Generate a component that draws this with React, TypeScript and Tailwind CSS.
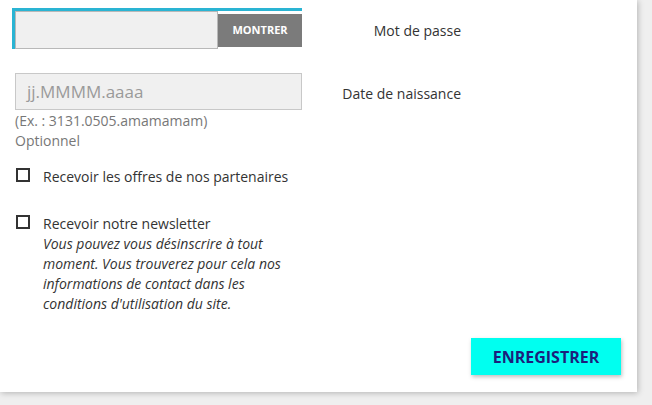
export default function App() {
  return (
    <div className="h-[405px] w-[652px] overflow-hidden bg-[#efefef] font-['Open_Sans',sans-serif] text-[14px] text-[#333]">
      <div className="flex h-[392px] w-[637px] flex-col bg-white pl-[12px] pt-[8px] shadow-[1px_1px_6px_rgba(0,0,0,0.25)]">
        {/* Mot de passe */}
        <div className="flex items-center">
          <div className="flex w-[290px] items-center border-l-[3px] border-t-[3px] border-[#2ab4d3]">
            <div className="h-[38px] w-[203px] border border-[#b8b8b8] bg-[#f0f0f0]" />
            <button className="flex h-[33px] w-[84px] items-center justify-center bg-[#7b7b7b] text-[11px] font-bold text-white">MONTRER</button>
          </div>
          <label className="mt-[3px] w-[159px] text-right">Mot de passe</label>
        </div>

        {/* Date de naissance */}
        <div className="mt-[24px] flex items-center pl-[3px]">
          <div className="flex h-[37px] w-[287px] items-center border border-[#c8c8c8] bg-[#f0f0f0] px-[11px] text-[17px] text-[#9a9a9a]">jj.MMMM.aaaa</div>
          <label className="mt-[3px] w-[159px] text-right">Date de naissance</label>
        </div>
        <div className="mt-[1px] pl-[3px] leading-[20px] text-[#777]">
          <p>(Ex. : 3131.0505.amamamam)</p>
          <p>Optionnel</p>
        </div>

        {/* Checkboxes */}
        <div className="mt-[16px] flex items-start pl-[4px] leading-[20px]">
          <span className="mt-[1px] h-[14px] w-[14px] shrink-0 border-2 border-[#333]" />
          <span className="ml-[13px]">Recevoir les offres de nos partenaires</span>
        </div>
        <div className="mt-[27px] flex items-start pl-[4px] leading-[20px]">
          <span className="mt-[1px] h-[14px] w-[14px] shrink-0 border-2 border-[#333]" />
          <div className="ml-[13px] w-[250px]">
            <p>Recevoir notre newsletter</p>
            <p className="italic">
              Vous pouvez vous désinscrire à tout moment. Vous trouverez pour cela nos informations de contact dans les conditions d'utilisation du site.
            </p>
          </div>
        </div>

        <div className="mt-[24px] flex justify-end pr-[16px]">
          <button className="h-[37px] w-[150px] bg-[#00fff0] text-[16px] font-bold text-[#1c1f7c] shadow-[1px_2px_4px_rgba(0,0,0,0.25)]">ENREGISTRER</button>
        </div>
      </div>
    </div>
  );
}
